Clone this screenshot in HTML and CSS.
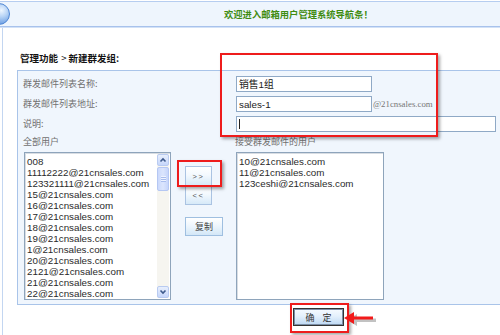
FILE: index.html
```html
<!DOCTYPE html>
<html lang="zh">
<head>
<meta charset="utf-8">
<title>新建群发组</title>
<link rel="stylesheet" href="styles.css">
</head>
<body>
<div class="screen">
  <div class="header">
    <span class="orb"></span>
    <span class="title">欢迎进入邮箱用户管理系统导航条！</span>
  </div>
  <div class="main">
    <div class="crumb">管理功能 <span class="gt">&gt;</span>新建群发组:</div>
    <div class="panel">
      <div class="label span2">群发邮件列表名称:</div>
      <div class="field"><input class="input short" type="text" value="销售1组"></div>
      <div class="label span2">群发邮件列表地址:</div>
      <div class="field"><input class="input short" type="text" value="sales-1"><span class="domain">@21cnsales.com</span></div>
      <div class="label span2">说明:</div>
      <div class="field"><input class="input long" type="text" value=""><span class="caret"></span></div>
      <div class="label span2">全部用户</div>
      <div class="label">接受群发邮件的用户</div>
      <div class="listbox">
        <ul class="items">
          <li>008</li>
          <li>11112222@21cnsales.com</li>
          <li>123321111@21cnsales.com</li>
          <li>15@21cnsales.com</li>
          <li>16@21cnsales.com</li>
          <li>17@21cnsales.com</li>
          <li>18@21cnsales.com</li>
          <li>19@21cnsales.com</li>
          <li>1@21cnsales.com</li>
          <li>20@21cnsales.com</li>
          <li>2121@21cnsales.com</li>
          <li>21@21cnsales.com</li>
          <li>22@21cnsales.com</li>
        </ul>
        <div class="scrollbar">
          <div class="sb-btn"><svg viewBox="0 0 10 10" width="10" height="10"><path d="M2.5 6.5 L5 4 L7.5 6.5" fill="none" stroke="#3d5a8c" stroke-width="1.6"/></svg></div>
          <div class="sb-thumb"><span class="grip"></span></div>
          <div class="sb-track"></div>
          <div class="sb-btn"><svg viewBox="0 0 10 10" width="10" height="10"><path d="M2.5 3.5 L5 6 L7.5 3.5" fill="none" stroke="#3d5a8c" stroke-width="1.6"/></svg></div>
        </div>
      </div>
      <div class="movers">
        <div class="pair">
          <button class="mv" type="button">&gt;&gt;</button>
          <button class="mv" type="button">&lt;&lt;</button>
        </div>
        <button class="copy" type="button">复制</button>
      </div>
      <div class="listbox right">
        <ul class="items">
          <li>10@21cnsales.com</li>
          <li>11@21cnsales.com</li>
          <li>123ceshi@21cnsales.com</li>
        </ul>
      </div>
    </div>
    <div class="actions">
      <button class="ok" type="button">确&nbsp;&nbsp;&nbsp;&nbsp;定</button>
    </div>
  </div>

  <div class="mark mark-form"></div>
  <div class="mark mark-move"></div>
  <div class="mark mark-ok"></div>
  <svg class="arrow" viewBox="0 0 36 20" width="36" height="20">
    <path d="M3 9 L13 3 L13 7.5 L32 7.5 L32 11 L13 11 L13 15 Z" fill="#777" opacity="0.45" transform="translate(2 2)"/>
    <path d="M2 9 L12 3 L12 7.5 L31 7.5 L31 10.5 L12 10.5 L12 15 Z" fill="#f21a1a"/>
  </svg>
</div>
</body>
</html>
```

FILE: styles.css
```css
* { box-sizing: border-box; }

html, body {
  margin: 0;
  padding: 0;
  background: #ffffff;
}

.screen {
  position: relative;
  width: 500px;
  height: 335px;
  overflow: hidden;
  font-family: "Noto Sans CJK SC", "Liberation Sans", sans-serif;
  font-size: 9px;
  color: #666;
}

.header {
  position: relative;
  margin-top: 1px;
  height: 26px;
  background: #eef5fd;
  border-top: 1px solid #b6cdf0;
  border-bottom: 1px solid #a8c2ec;
  box-shadow: 0 1px 0 #d3e2f7;
  display: flex;
  align-items: center;
}

.orb {
  position: absolute;
  left: -12px;
  top: 1px;
  width: 22px;
  height: 22px;
  border-radius: 50%;
  border: 1px solid #4f86d4;
  background: radial-gradient(circle at 62% 32%, #eef6ff 0%, #b6d3f6 35%, #6d9fe3 75%, #4a82d2 100%);
}

.title {
  margin-left: 224px;
  font-size: 9.3px;
  font-weight: bold;
  color: #3f8c10;
  line-height: 12px;
}

.main {
  margin-left: 2px;
  border-left: 1px solid #c3d6f1;
  height: 308px;
}

.crumb {
  padding-top: 25px;
  padding-left: 17px;
  font-size: 9.5px;
  line-height: 12px;
  font-weight: bold;
  color: #111;
}

.gt {
  margin: 0 2px 0 1px;
  font-weight: normal;
}

.panel {
  margin-top: 6px;
  margin-left: 14px;
  margin-right: -10px;
  padding: 5px 0 4px 6px;
  background: #f0f6fd;
  border: 1px solid #a9c4e9;
  display: grid;
  grid-template-columns: 147px 65px 1fr;
  grid-template-rows: 16px 16px 16px 12px 148px;
  row-gap: 4px;
}

.label {
  display: flex;
  align-items: center;
  margin-left: -1px;
  line-height: 12px;
  color: #707070;
}

.span2 { grid-column: 1 / 3; }

.field {
  display: flex;
  align-items: center;
  position: relative;
}

.input {
  height: 16px;
  border: 1px solid #8fa9c6;
  background: #fff;
  padding: 0 2px;
  margin: 0;
  font-family: "Liberation Sans", "Noto Sans CJK SC", sans-serif;
  font-size: 9.8px;
  color: #222;
  outline: none;
}

.input.short { width: 136px; }
.input.long { width: 260px; }

.caret {
  position: absolute;
  left: 3px;
  top: 3px;
  width: 1px;
  height: 10px;
  background: #222;
}

.domain {
  margin-left: 1px;
  font-family: "Liberation Serif", serif;
  font-size: 8.8px;
  color: #777;
}

.listbox {
  display: flex;
  width: 147px;
  height: 148px;
  background: #fff;
  border: 1px solid #8ea4bb;
  box-shadow: inset 1px 1px 0 #d8dde3;
}

.listbox.right { width: 148px; }

.items {
  list-style: none;
  margin: 0;
  padding: 3px 2px;
  flex: 1;
  overflow: hidden;
  font-family: "Liberation Sans", sans-serif;
  font-size: 9.8px;
  line-height: 11px;
  color: #2a2a2a;
}

.items li { white-space: nowrap; }

.scrollbar {
  width: 12px;
  margin: 1px 1px 1px 0;
  display: flex;
  flex-direction: column;
  background: #f6f5f0;
}

.sb-btn {
  height: 12px;
  border: 1px solid #b9cbf1;
  border-radius: 2px;
  background: linear-gradient(#e8effd, #c6d6fb);
  display: flex;
  align-items: center;
  justify-content: center;
}

.sb-thumb {
  height: 24px;
  margin-top: 1px;
  border: 1px solid #b5c7f3;
  border-radius: 2px;
  background: linear-gradient(90deg, #cbd9fc, #dbe5fd 50%, #c6d5fb);
  display: flex;
  align-items: center;
  justify-content: center;
}

.grip {
  width: 5px;
  height: 6px;
  background: repeating-linear-gradient(#eef3ff 0 1px, #a9bdee 1px 2px);
}

.sb-track { flex: 1; }

.movers {
  padding-left: 14px;
  display: flex;
  flex-direction: column;
  align-items: flex-start;
}

.pair {
  margin-top: 14px;
  display: flex;
  flex-direction: column;
}

.mv {
  width: 27px;
  height: 20px;
  margin: 0;
  padding: 0;
  border: 1px solid #aac3e2;
  background: linear-gradient(#ffffff, #f3f9fe 45%, #d6e9f8);
  font-family: "Liberation Sans", sans-serif;
  font-size: 7.5px;
  letter-spacing: 1.5px;
  color: #555;
}

.mv + .mv { margin-top: -1px; }

.copy {
  margin-top: 12px;
  width: 38px;
  height: 19px;
  padding: 0;
  border: 1px solid #9fbfe0;
  background: linear-gradient(#ffffff, #eef6fd 45%, #d3e7f7);
  font-family: "Noto Sans CJK SC", sans-serif;
  font-size: 9px;
  color: #444;
}

.actions {
  margin-top: 3px;
  padding-left: 290px;
}

.ok {
  width: 51px;
  height: 18px;
  margin: 0;
  padding: 0;
  border: 1px solid #333;
  box-shadow: inset 0 0 0 1px #7a8ea6;
  background: linear-gradient(#f6fbff, #e4f0fc 45%, #bcd8f3);
  font-family: "Noto Sans CJK SC", sans-serif;
  font-size: 9px;
  color: #333;
}

.mark {
  position: absolute;
  border: 2px solid #ee1c1c;
  box-shadow: 2px 2px 3px rgba(0, 0, 0, 0.35);
}

.mark-form { left: 220px; top: 53px; width: 218px; height: 84px; }
.mark-move { left: 177px; top: 160px; width: 45px; height: 27px; }
.mark-ok { left: 290px; top: 303px; width: 59px; height: 30px; }

.arrow {
  position: absolute;
  left: 342px;
  top: 309px;
}
```
